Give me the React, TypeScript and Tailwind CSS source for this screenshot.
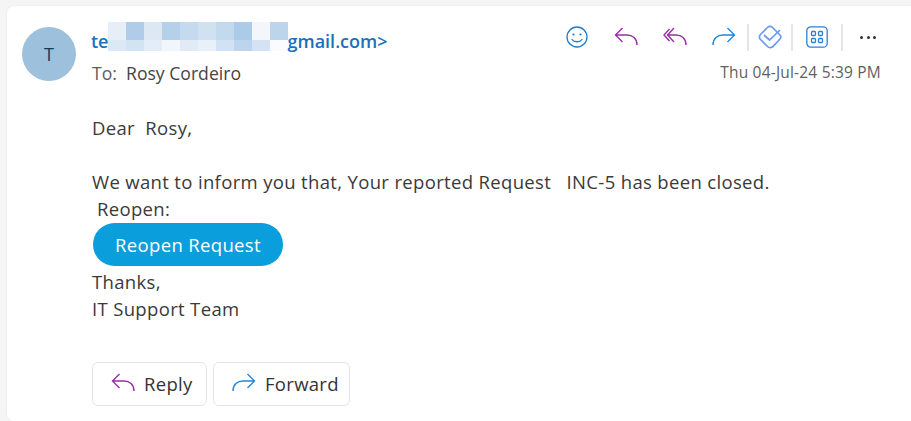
const font = { fontFamily: '"Open Sans", sans-serif' };

function ReplyIcon({ className = "" }: { className?: string }) {
  return (
    <svg width="24" height="20" viewBox="0 0 24 20" fill="none" stroke="currentColor" strokeWidth="1.4" className={className}>
      <path d="M8.5 1 L1.5 8 L8.5 15 M1.5 8 H13 C18.5 8 23 11.5 23 18" />
    </svg>
  );
}
function ReplyAllIcon({ className = "" }: { className?: string }) {
  return (
    <svg width="24" height="20" viewBox="0 0 24 20" fill="none" stroke="currentColor" strokeWidth="1.4" className={className}>
      <path d="M6.5 2 L1 8 L6.5 14 M11 1 L4.5 8 L11 15 M4.5 8 H13 C18.5 8 23 11.5 23 18" />
    </svg>
  );
}
function ForwardIcon({ className = "" }: { className?: string }) {
  return (
    <svg width="24" height="20" viewBox="0 0 24 20" fill="none" stroke="currentColor" strokeWidth="1.4" className={className}>
      <path d="M15.5 1 L22.5 8 L15.5 15 M22.5 8 H11 C5.5 8 1 11.5 1 18" />
    </svg>
  );
}
const Sep = () => <div className="w-[2px] h-[27px] bg-[#e6e6e6]" />;

const topRow = ["#e6eff8","#afcde8","#dce8f4","#b5d1ea","#c5daee","#d0e1f1","#c3d9ee","#abcbe8","#f3f7fc","#bcd4ec"];
const botRow = ["#dbe8f5","#d2e3f3","#e3edf7","#f1f5fc","#e1ebf6","#e8f0f9","#d0e2f3","#bcd5ec","#d3e3f3","#fafbfe"];

export default function App() {
  return (
    <div style={font} className="w-[911px] h-[421px] bg-[#f5f5f5] pt-[5px] pl-[6px] overflow-hidden">
      <div className="h-[416px] bg-white rounded-l-lg border-t border-l border-[#efefef] flex flex-col pt-[21px] pl-[15px] pr-[30px]">
        <div className="flex gap-[16px] h-[54px]">
          <div className="w-[54px] h-[54px] rounded-full bg-[#9dc0dd] flex items-center justify-center text-[18px] text-[#0f3a5e] shrink-0">T</div>
          <div className="flex-1 flex flex-col -mt-[6px]">
            <div className="flex justify-between h-[34px]">
              <div className="flex items-center text-[#1a71ba] text-[18px] font-semibold h-[34px] pt-[6px]">
                <span className="-ml-[1px]">te</span>
                <span className="flex flex-col w-[180px] h-[29px] -ml-[1px] shrink-0 self-start mt-[-5px]">
                  <span className="flex h-[18px]">{topRow.map((c, i) => <span key={i} className="flex-1" style={{ background: c }} />)}</span>
                  <span className="flex h-[11px]">{botRow.map((c, i) => <span key={i} className="flex-1" style={{ background: c }} />)}</span>
                </span>
                <span>gmail.com&gt;</span>
              </div>
              <div className="flex items-center h-[30px] mt-[1px] text-[#1e7cc8]">
                <svg width="22" height="22" viewBox="0 0 22 22" fill="none" stroke="currentColor" strokeWidth="1.3" className="mr-[26px]">
                  <circle cx="11" cy="11" r="10" />
                  <circle cx="7.5" cy="8.5" r="1.1" fill="currentColor" stroke="none" />
                  <circle cx="14.5" cy="8.5" r="1.1" fill="currentColor" stroke="none" />
                  <path d="M6 13.5 C8 16.5 14 16.5 16 13.5" strokeLinecap="round" />
                </svg>
                <ReplyIcon className="text-[#9a2ea8] mr-[25px]" />
                <ReplyAllIcon className="text-[#9a2ea8] mr-[25px]" />
                <ForwardIcon className="text-[#1e88e0] mr-[11px]" />
                <Sep />
                <svg width="24" height="24" viewBox="0 0 24 24" fill="none" stroke="#6c9bec" strokeWidth="1.7" className="mx-[9px]">
                  <path d="M9.5 2.5 C11 1 13 1 14.5 2.5 L22 10 C23.2 11.5 23 13 22 14 L15 21.5 C13 23 11 23 9.5 21.5 L2.5 14.5 C1 13 1 11 2.5 9.5 Z" />
                  <path d="M6 10 L11.5 15 L22 5" />
                </svg>
                <Sep />
                <svg width="22" height="22" viewBox="0 0 22 22" fill="none" stroke="#2f7fd0" strokeWidth="1.3" className="mx-[13px]">
                  <rect x="0.8" y="0.8" width="20.4" height="20.4" rx="4" />
                  <rect x="5.5" y="5.5" width="4" height="4" rx="1" />
                  <rect x="12.5" y="5.5" width="4" height="4" rx="1" />
                  <rect x="5.5" y="12.5" width="4" height="4" rx="1" />
                  <rect x="12.5" y="12.5" width="4" height="4" rx="1" />
                </svg>
                <Sep />
                <div className="flex gap-[3.5px] ml-[17px] mr-[5px]">
                  <span className="w-[3px] h-[3px] rounded-full bg-[#333]" />
                  <span className="w-[3px] h-[3px] rounded-full bg-[#333]" />
                  <span className="w-[3px] h-[3px] rounded-full bg-[#333]" />
                </div>
              </div>
            </div>
            <div className="flex justify-between items-center h-[24px] mt-[6px]">
              <div className="text-[17.6px] text-[#444]">
                <span className="text-[#5c5c5c]">To:</span>&nbsp; Rosy Cordeiro
              </div>
              <div className="text-[15.5px] tracking-[0.2px] text-[#5f5f5f]">Thu 04-Jul-24 5:39 PM</div>
            </div>
          </div>
        </div>

        <div className="pl-[70px] mt-[33px] text-[18.5px] leading-[27px] text-[#3a3a3a] tracking-[0.34px] whitespace-pre">
          <div>Dear  Rosy,</div>
          <div className="h-[27px]" />
          <div>We want to inform you that, Your reported Request   INC-5 has been closed.</div>
          <div className="pl-[5px]">Reopen:</div>
          <div className="w-[190px] h-[43px] ml-[1px] mt-[1px] rounded-full bg-[#0a9edc] text-white flex items-center justify-center">Reopen Request</div>
          <div className="mt-[2px]">Thanks,</div>
          <div>IT Support Team</div>
        </div>

        <div className="flex gap-[6px] pl-[70px] mt-[40px] text-[18.5px] tracking-[0.3px] text-[#333]">
          <div className="w-[115px] h-[44px] rounded-md border border-[#e5e5e5] flex items-center pl-[18px] gap-[9px]">
            <ReplyIcon className="text-[#9a2ea8] -mt-[3px]" />
            <span>Reply</span>
          </div>
          <div className="w-[137px] h-[44px] rounded-md border border-[#e5e5e5] flex items-center pl-[18px] gap-[9px]">
            <ForwardIcon className="text-[#1e88e0] -mt-[3px]" />
            <span>Forward</span>
          </div>
        </div>
      </div>
    </div>
  );
}
